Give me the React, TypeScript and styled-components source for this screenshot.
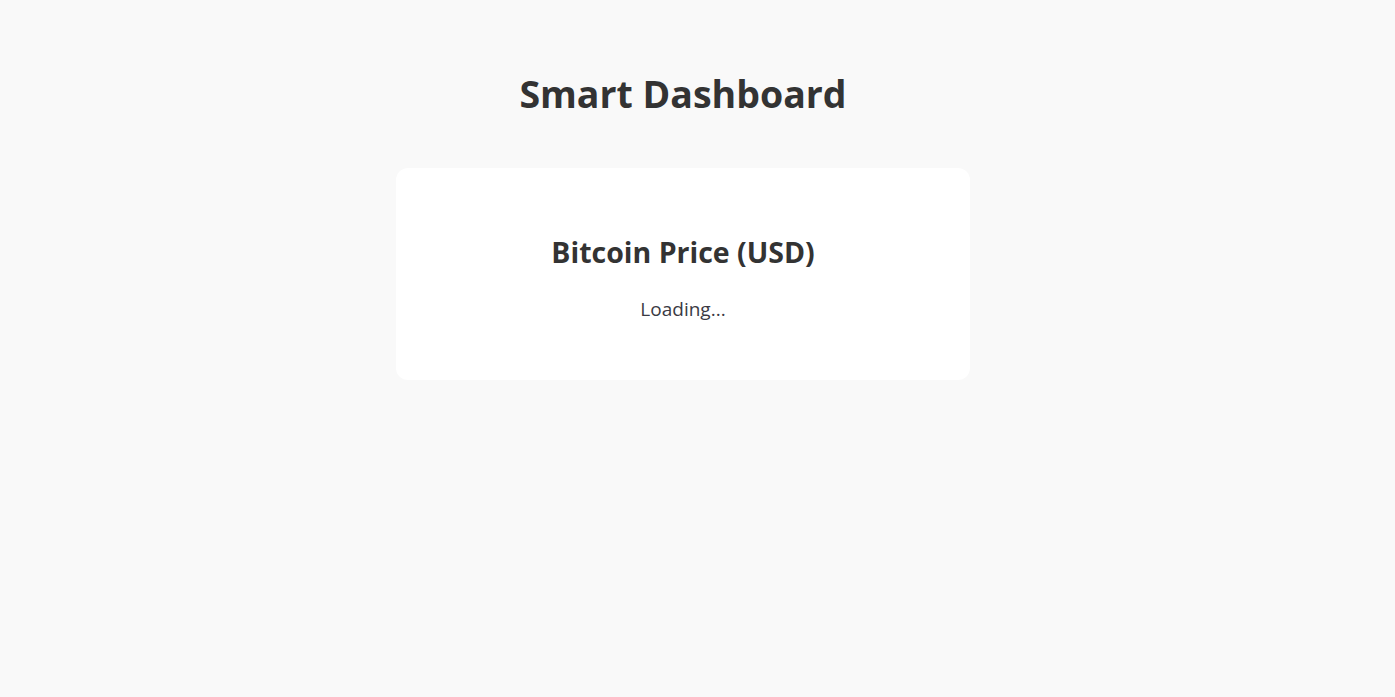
import React from "react";
import styled, { createGlobalStyle } from "styled-components";

const GlobalStyle = createGlobalStyle`
  html, body {
    margin: 0;
    padding: 0;
    background: #f9f9f9;
  }
  body {
    font-family: "Open Sans", "Noto Sans", sans-serif;
    color: #333;
  }
`;

const Page = styled.main`
  box-sizing: border-box;
  width: 1366px;
  min-height: 697px;
  padding-top: 66px;
  display: flex;
  flex-direction: column;
  align-items: center;
`;

const Title = styled.h1`
  margin: 0 0 46px;
  font-size: 37.5px;
  line-height: 56px;
  font-weight: 700;
  color: #333;
`;

const Card = styled.section`
  box-sizing: border-box;
  width: 574px;
  height: 212px;
  background: #fff;
  border-radius: 12px;
  display: flex;
  flex-direction: column;
  align-items: center;
  justify-content: center;
  padding-top: 5px;
`;

const CardTitle = styled.h2`
  margin: 0 0 24px;
  font-size: 28.5px;
  line-height: 40px;
  font-weight: 700;
  color: #333;
`;

const Status = styled.p`
  margin: 0;
  font-size: 19px;
  line-height: 26px;
  color: #3a3a44;
`;

export default function App() {
  return (
    <>
      <GlobalStyle />
      <Page>
        <Title>Smart Dashboard</Title>
        <Card>
          <CardTitle>Bitcoin Price (USD)</CardTitle>
          <Status>Loading...</Status>
        </Card>
      </Page>
    </>
  );
}
